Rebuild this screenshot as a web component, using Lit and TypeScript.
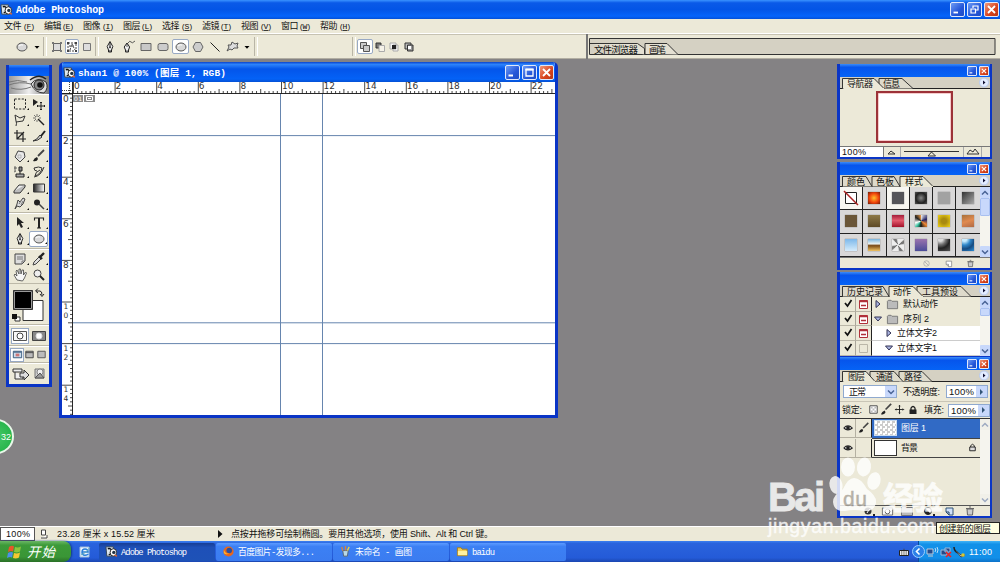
import { LitElement, html, svg, css } from 'lit';
import { customElement, property } from 'lit/decorators.js';
import { styleMap } from 'lit/directives/style-map.js';

// one line of text squeezed to a fixed width, the way the bitmap fonts sit
const label = (text: string, width: number, size = 9, cls = "") => html`
  <svg class="label ${cls}" width=${width} height=${size + 3}>
    <text y=${size} font-size=${size} textLength=${width}>${text}</text>
  </svg>`;

const icons: Record<string, any> = {
  ellipse: svg`<ellipse rx="5" ry="4" fill="#d8d8d8" stroke="#555"/><path d="M-3 -1q2-2 4-1" stroke="#fff"/>`,
  arrow: svg`<path d="M-2.5 -1h5l-2.5 2.8z" fill="#000"/>`,
  shape: svg`<path d="M-3.5 -3.5h7v7h-7z" fill="#ddd" stroke="#666"/><path d="M-5-5h2v2h-2zM3-5h2v2h-2zM-5 3h2v2h-2zM3 3h2v2h-2z" fill="#777"/>`,
  paths: svg`<path d="M-4-4h8v8h-8zM-2 3l2-6l3 6M-3-1h6" stroke="#444" stroke-dasharray="2 1"/><path d="M-5-5h2v2h-2zM3-5h2v2h-2zM-5 3h2v2h-2zM3 3h2v2h-2z" fill="#444"/>`,
  pixels: svg`<path d="M-3.5-3.5h7v7h-7z" fill="#ddd" stroke="#777"/>`,
  pen: svg`<path d="M-1.5 5v-2l-1.3-3.5L0-5.5l2.8 5L1.5 3v2z" fill="#eee" stroke="#222"/><path d="M0-5v5M-2 4h4" stroke="#222"/><circle r=".9" cy=".3" fill="#222"/>`,
  freepen: svg`<path d="M-3.5 5v-2l-1.3-3L-2-4l2.6 4L-.5 3v2z" fill="#eee" stroke="#222"/><path d="M-2-4v4M-4 4h4M-1-4q2-3 3-1t4-1" stroke="#333" stroke-width=".8"/>`,
  rect: svg`<path d="M-5-3.5h10v7h-10z" fill="#c8c8c8" stroke="#666"/>`,
  rrect: svg`<rect x="-5" y="-3.5" width="10" height="7" rx="2" fill="#ccc" stroke="#666"/>`,
  poly: svg`<path d="M-5 0l2.5-4.5h5L5 0L2.5 4.5h-5z" fill="#ccc" stroke="#666"/>`,
  line: svg`<path d="M-4.5-4.5l9 9" stroke="#222"/>`,
  blob: svg`<path d="M-6 4l2-4l-1-2l3 0l1-3l3 2l3-1l-1 3l1 2l-4 0l-2 2l-2-1z" fill="#ddd" stroke="#555"/>`,
  add: svg`<path d="M-4.5-4.5h6v6h-6z" fill="#ccc" stroke="#555"/><path d="M-1.5-1.5h6v6h-6z" fill="#ccc" stroke="#555"/>`,
  sub: svg`<path d="M-4-4h5v5h-5z" fill="#777" stroke="#333"/><path d="M-1-1.5h5.5v6h-5.5z" fill="#f5f2e8" stroke="#aaa"/>`,
  inter: svg`<path d="M-4-4h6v6h-6zM-1-2h5v6h-5z" fill="#f4f4f4" stroke="#aaa"/><path d="M-2-2h4v4h-4z" fill="#222"/>`,
  excl: svg`<path d="M-4-4h6v6h-6z" fill="#bbb" stroke="#333"/><path d="M-1.5-2h5.5v6h-5.5z" fill="#999" stroke="#333"/><path d="M-1-1h3v3h-3z" fill="#fff"/>`,
  marquee: svg`<path d="M-5.5-5h11v10h-11z" stroke="#222" stroke-dasharray="2.2 1.4"/>`,
  move: svg`<path d="M-6-5v7l5-4z" fill="#222"/><path d="M2-2v8M-2 2h8M1-1l1-1l1 1M1 5l1 1l1-1M-1 1l-1 1l1 1M5 1l1 1l-1 1" stroke="#222"/>`,
  lasso: svg`<path d="M-4 6q1-3 0-5l-1-6l5 3l5-2l-2 5l-7 1" stroke="#333"/>`,
  wand: svg`<path d="M-1-1l6 6" stroke="#222" stroke-width="1.4"/><path d="M-2-6v3M-2 0v2M-6-2h3M0-2h2M-5-5l2 2M1-5l-2 2M-5 1l2-2" stroke="#444" stroke-width=".7"/>`,
  crop: svg`<path d="M-3-6v9h9M-6-3h9v9M-3 3l7-7" stroke="#222" stroke-width="1.2"/>`,
  slice: svg`<path d="M-6 5q4-1 7-6l2 2q-4 4-9 4z" fill="#ccc" stroke="#333"/><path d="M2 0l4-5" stroke="#222" stroke-width="2"/>`,
  heal: svg`<path d="M-5 1l3-6l6 1l1 5l-5 5z" fill="#e8e8e8" stroke="#444"/><path d="M-2-1h3v3h-3z" stroke="#999" stroke-width=".6"/>`,
  brush: svg`<path d="M-6 5q1-3 4-4l1 2q-1 3-5 2z" fill="#222"/><path d="M-1 0l6-6" stroke="#444" stroke-width="1.8"/>`,
  stamp: svg`<path d="M-4 2h8v3h-8z" fill="#aaa" stroke="#222"/><path d="M0 2v-3M-1-5h3v4h-3z" fill="#888" stroke="#222"/><path d="M-6-4h3M-5-6v5M-6 0l2-1" stroke="#444" stroke-width=".8"/>`,
  history: svg`<path d="M-5-4q5-2 8 0q-1 6-7 8q0-4 5-6M-5-4q0 3 3 3M-5 5q7-1 10-10" stroke="#333"/>`,
  eraser: svg`<path d="M-6 3l5-6h6l-5 6z" fill="#eee" stroke="#333"/><path d="M-6 3v2h6l5-6v-2" fill="#bbb" stroke="#333"/>`,
  gradient: svg`<path d="M-5.5-4h11v8h-11z" fill="url(#fade)" stroke="#333"/>`,
  smudge: svg`<path d="M-5 5l2-5l1-4l2 2l3-4l2 1l-2 5l-3 3l-3-1z" fill="#ddd" stroke="#444"/><path d="M-1 0l2-3M1 1l2-4" stroke="#777"/>`,
  burn: svg`<circle cx="-2" cy="-1.5" r="3" fill="#222"/><path d="M0 0l5 5" stroke="#444" stroke-width="1.5"/>`,
  select: svg`<path d="M-3-6v9l2-2l2 4l2-1l-2-4h3z" fill="#222"/>`,
  type: svg`<path d="M-4.5-2.5v-2.500h9v2.500M-2 5h4" stroke="#222" stroke-width="1.1"/><path d="M0-5v10" stroke="#222" stroke-width="2"/>`,
  note: svg`<path d="M-5-5h10v7l-3 3h-7z" fill="#ddd" stroke="#444"/><path d="M-3-2h6M-3 0h6M2 5v-3h3" stroke="#777"/>`,
  dropper: svg`<path d="M-6 6l1-3l5-5l2 2l-5 5z" fill="#ddd" stroke="#444"/><path d="M0-3l3 3M1-2l4-4" stroke="#222" stroke-width="2.4"/>`,
  hand: svg`<path d="M-3 5l-3-5l1-1l2 2l-1-5l1-1l2 4v-5h1.5l.5 5l1-4h1.5v5l2-3l1 1l-2 5l-2 3z" fill="#f6f6f6" stroke="#444" stroke-width=".8"/>`,
  zoom: svg`<circle cx="-1.5" cy="-1.5" r="3.5" fill="#eee" stroke="#444"/><path d="M1 1l4 4" stroke="#222" stroke-width="2"/>`,
  mask: svg`<path d="M-6.5-4.5h13v9h-13z" fill="#f8f8f8" stroke="#555"/><circle r="3" fill="#fff" stroke="#444"/>`,
  maskOn: svg`<path d="M-6.5-4.5h13v9h-13z" fill="#888" stroke="#444"/><circle r="3" fill="#fff" stroke="#ddd"/>`,
  screen1: svg`<path d="M-4.5-3.5h9v7h-9z" fill="#cde" stroke="#357"/><path d="M-4-2.5h8" stroke="#357"/><path d="M-2-1h4v3h-4z" fill="#c77"/>`,
  screen2: svg`<path d="M-4-3.5h8v7h-8z" fill="#bbb" stroke="#444"/><path d="M-4-2h8" stroke="#444"/>`,
  screen3: svg`<path d="M-4-3.5h8v7h-8z" fill="#bbb" stroke="#555"/>`,
  jump: svg`<path d="M-7-5h9v3M-7-5v3h9M-5-2v7h8v-2" fill="#eee" stroke="#333"/><path d="M0-1h4v-3l5 5l-5 5v-3h-4z" fill="#ddd" stroke="#333"/>`,
  ready: svg`<path d="M-4-5h9v9h-9z" fill="#ccc" stroke="#777"/><circle cx="1" cy="-2" r="3" fill="#eee" stroke="#888"/><path d="M-4 4l5-5l4 5z" fill="#999" stroke="#555"/>`,
  eye: svg`<path d="M-5 0q5-5 10 0q-5 4.5-10 0" fill="#fff" stroke="#222" stroke-width="1.2"/><circle r="2.2" fill="#222"/>`,
  lock: svg`<path d="M-3.5-.5h7v4.5h-7z" fill="#222"/><path d="M-2 0v-2q2-3 4 0v2" stroke="#222" stroke-width="1.3"/>`,
  lockThin: svg`<path d="M-3-.5h6v4h-6z" fill="#ddd" stroke="#222"/><path d="M-2-.5v-1.5q2-3 4 0v1.5" stroke="#222"/>`,
  checker: svg`<path d="M-4-4h8v8h-8z" fill="#fff" stroke="#444"/><path d="M-3-3h2v2h-2zM1-3h2v2h-2zM-1-1h2v2h-2zM-3 1h2v2h-2zM1 1h2v2h-2z" fill="#bbb"/>`,
  cross: svg`<path d="M0-4.5v9M-4.5 0h9M-1-3.5l1-1l1 1M-1 3.5l1 1l1-1M-3.5-1l-1 1l1 1M3.5-1l1 1l-1 1" stroke="#222"/>`,
  folder: svg`<path d="M-5.5-3.5l1-1h3l1 1h6v8h-11z" fill="#bbb" stroke="#777"/>`,
  none: svg`<circle r="3.5" stroke="#aaa"/><path d="M-2.5-2.5l5 5" stroke="#aaa"/>`,
  page: svg`<path d="M-3-3h7v7h-4l-3-3z" fill="#fff" stroke="#888"/><path d="M-3 1h3v3" stroke="#888"/>`,
  pageBlue: svg`<path d="M-3-3h7v7h-4l-3-3z" fill="#cfe0fa" stroke="#357"/><path d="M-3 1h3v3" stroke="#246"/>`,
  trash: svg`<path d="M-3-2h6l-.5 6h-5z" fill="#ccc" stroke="#666"/><path d="M-4-2.5h8M-1-4h2" stroke="#666"/>`,
  fx: svg`<circle r="3.5" fill="#333"/><path d="M-1 2q1-2 3-4" stroke="#fff"/><path d="M5 3h2v2h-2z" fill="#222"/>`,
  adjust: svg`<circle r="3.5" fill="#fff" stroke="#333"/><path d="M-2.5-2.5l5 5a3.5 3.5 0 0 1-5-5" fill="#222"/><path d="M5 3h2v2h-2z" fill="#222"/>`,
  ps: svg`<path d="M-6-5h8v10h-7z" fill="#dfe8ee" stroke="#345"/><path d="M-4-3q4-1 4 3t-3 3" stroke="#111" stroke-width="1.5"/><ellipse cx="2" cy="1" rx="3.5" ry="4" fill="#fff" stroke="#222"/><circle cx="2.5" cy="1" r="1.8" fill="#234"/><path d="M3 4l3 1" stroke="#d63" stroke-width="1.5"/>`,
  ie: svg`<path d="M-5-5h9v10h-9z" fill="#eef5ff" stroke="#9bd"/><path d="M-3 0h6q0-3-3-3t-3 3.2t3 3t3-1.5" stroke="#2a7fd8" stroke-width="1.5"/><path d="M-4 3q6-2 9-8" stroke="#6ab"/>`,
  firefox: svg`<circle r="5.5" fill="#e8661b"/><circle cx=".8" cy="-1" r="3" fill="#2b4f9e"/><path d="M-5-2q2 5 6 4q-3 2-6 0z" fill="#ffb52e"/>`,
  paint: svg`<path d="M-3-1h6l-1 6h-4z" fill="#b9d9e8" stroke="#567"/><path d="M-3-1l-1-4M0-1v-5" stroke="#d9843b" stroke-width="1.5"/><path d="M2-1l2-4" stroke="#e9d044" stroke-width="1.5"/>`,
  dir: svg`<path d="M-5.5-4h4l1 1.5h5.5v7h-10.5z" fill="#f4cf57" stroke="#a87d16"/><path d="M-5-.5h10v4.5h-10z" fill="#fff1a0"/>`,
  keyboard: svg`<path d="M-4.5-1.5h9v5h-9z" fill="#eee" stroke="#222"/><path d="M-3 0h6M-3 2h6M0-2v-2" stroke="#444" stroke-dasharray="1 .7"/>`,
  net: svg`<path d="M-5-3h6v5h-6z" fill="#264a8a" stroke="#bcd"/><path d="M-4 4h5" stroke="#ccc"/><path d="M3-4q1.5 2 0 4M5-5q2 3 0 6" stroke="#fff" stroke-width=".7"/>`,
  netOff: svg`<path d="M-1-4h5v4h-5zM-5-2h6v5h-6z" fill="#264a8a" stroke="#9bd"/><path d="M0 0l5 5M5 0l-5 5" stroke="#e22" stroke-width="1.6"/>`,
  device: svg`<path d="M-6-5q0 4 4 6" stroke="#222" stroke-width="1.5"/><path d="M-4-1l5 4l4 0l-4 2z" fill="#eee" stroke="#444"/><circle cx="3" cy="3" r="1.8" fill="#d7c832"/>`,
  doc: svg`<path d="M-2.5-4h4v5h-4zM-3 4h6v-3" fill="#fff" stroke="#444"/>`,
};

const icon = (name: string, size = 14) => html`
  <svg class="icon" width=${size} height=${size} viewBox="-7 -7 14 14" fill="none">${icons[name]}</svg>`;

const shared = css`
  * { box-sizing: border-box; }
  svg { display: block; flex: none; overflow: visible; }
  .label text { font-family: "Liberation Sans", "Noto Sans CJK SC", sans-serif; fill: #111; }
  .label.mono text { font-family: "Liberation Mono", "Noto Sans CJK SC", monospace; }
  .label.white text { fill: #fff; }
  .label.bold text { font-weight: bold; }
  .btn {
    width: 15px; height: 15px; border: 1px solid #dfe8fb; border-radius: 2px; flex: none;
    background: linear-gradient(135deg, #6d9bf5, #2456d8 60%, #1f4cc4);
  }
  .btn.close { background: linear-gradient(135deg, #f0997b, #d8431d 60%, #b93614); }
  .btn svg { width: 100%; height: 100%; }
`;

const winButton = (kind: string) => html`
  <div class="btn ${kind}">
    <svg viewBox="0 0 13 13" fill="none" stroke="#fff" stroke-width="1.8">
      ${kind === "close" ? svg`<path d="M3 3l7 7M10 3l-7 7"/>`
        : kind === "max" ? svg`<path d="M3 3.5h7v6.5h-7z" stroke-width="1.3"/><path d="M2.5 3.5h8"/>`
        : kind === "restore" ? svg`<path d="M5 5v-2h5v4h-2M3 6h4.5v4h-4.5z" stroke-width="1.2"/>`
        : svg`<path d="M2.5 9.5h4.5"/>`}
    </svg>
  </div>`;

interface Tab {
  text: string;
  left: number;
  right: number;
  slant: number;
  at: number;
  width: number;
  active?: boolean;
}

@customElement('ps-palette')
export class PaletteComponent extends LitElement {
  @property({ attribute: false })
  tabs: Tab[] = [];

  static styles = [shared, css`
    :host {
      display: flex; flex-direction: column; box-sizing: border-box; overflow: hidden;
      border: 3px solid #0a35c6; border-top: 0; border-right-width: 2px; border-bottom-width: 2px; background: #ece9d8;
    }
    .bar {
      display: flex; justify-content: flex-end; align-items: center; gap: 2px; flex: none;
      height: 13px; padding-right: 1px; background: linear-gradient(#3b8cf8, #0655ec 25%, #0563f6);
    }
    .bar .btn { width: 10px; height: 10px; border-radius: 1px; }
    .strip { height: 12px; flex: none; background: #d5d1c3; }
    .strip text { font-family: "Noto Sans CJK SC", sans-serif; font-size: 9px; fill: #111; }
    .body { flex: 1; min-height: 0; display: flex; flex-direction: column; }
  `];

  renderTab(t: Tab) {
    return svg`
      <path d="M${t.left} 11.5V1.5H${t.right}L${t.right + t.slant} 11.5"
        fill=${t.active ? "#ece9d8" : "#dedacb"} stroke="#222" stroke-width=".9"/>
      <text x=${t.at} y="10" textLength=${t.width}>${t.text}</text>`;
  }

  render() {
    const tabs = [...this.tabs].reverse().sort((a, b) => Number(!!a.active) - Number(!!b.active));
    const active = this.tabs.find((t) => t.active);
    return html`
      <div class="bar">${winButton("min")}${winButton("close")}</div>
      <svg class="strip" width="150" height="12">
        <path d="M0 11.5H150" stroke="#222"/>
        ${tabs.map((t) => this.renderTab(t))}
        ${active ? svg`<path d="M${active.left + 1} 11.5H${active.right + active.slant}" stroke="#ece9d8" stroke-width="1.2"/>` : ""}
        <circle cx="144" cy="5.5" r="4.5" fill="#e3ecff" stroke="#b7c9ee"/>
        <path d="M143 3.5v4l2.5-2z" fill="#113"/>
      </svg>
      <div class="body"><slot></slot></div>
    `;
  }
}

const tools = [
  ["marquee", "move", "lasso", "wand", "crop", "slice"],
  ["heal", "brush", "stamp", "history", "eraser", "gradient", "smudge", "burn"],
  ["select", "type", "pen", "ellipse"],
  ["note", "dropper", "hand", "zoom"],
];
const plain = ["move", "wand", "crop", "hand", "zoom"];

const menus: [string, string][] = [
  ["文件", "F"], ["编辑", "E"], ["图像", "I"], ["图层", "L"], ["选择", "S"],
  ["滤镜", "T"], ["视图", "V"], ["窗口", "W"], ["帮助", "H"],
];

// icon name and the width of its slot
const options: [string, number][] = [
  ["ellipse", 20], ["arrow", 9], ["|", 8], ["shape", 16], ["paths on", 14], ["pixels", 15], ["|", 6],
  ["pen", 19], ["freepen", 19], ["rect", 15], ["rrect", 19], ["ellipse on", 17], ["poly", 17],
  ["line", 18], ["blob", 18], ["arrow", 10], ["|", 7], ["", 92], ["|", 6],
  ["add on", 16], ["sub", 13], ["inter", 15], ["excl", 15], ["", 170],
];

const swatches = [
  "none",
  "radial-gradient(#ffc02c, #f0440c 55%, #6c1c08)",
  "#55555a",
  "radial-gradient(#888, #222 60%, #555)",
  "#a2a2a2",
  "linear-gradient(135deg, #333, #aaa)",
  "#6a5638",
  "linear-gradient(#8d7948, #5e4a26)",
  "linear-gradient(#a31d3b, #e35a6d 45%, #a3122a)",
  "conic-gradient(#eee, #226 20%, #e83 35%, #111 50%, #3b9 60%, #fff 70%, #222 85%, #e94)",
  "radial-gradient(#a88a10 30%, #f2d415)",
  "linear-gradient(160deg, #a7713a, #e08a50 50%, #b06a45)",
  "linear-gradient(#7db8ea, #d6ecfb)",
  "linear-gradient(#79b4dd, #e9f1f1 40%, #7a4a15 55%, #f0c464)",
  "repeating-conic-gradient(#eee 0 12%, #777 15% 20%, #fff 25%)",
  "linear-gradient(#9a73ae, #4a4c98)",
  "radial-gradient(circle at 20% 0, #ddd 15%, #777 35%, #222 60%, #555)",
  "radial-gradient(circle at 20% 0, #c8ecff 15%, #2f86c8 40%, #164a80 65%, #2c92dc)",
];

const actions = [
  { text: "默认动作", width: 35, depth: 0, open: false, red: true },
  { text: "序列 2", width: 26, depth: 0, open: true, red: true },
  { text: "立体文字2", width: 40, depth: 1, open: false, red: true },
  { text: "立体文字1", width: 40, depth: 1, open: true, red: false },
];

const tasks: [string, string, number, boolean][] = [
  ["ps", "Adobe Photoshop", 66, true],
  ["firefox", "百度图片-发现多...", 77, false],
  ["paint", "未命名 - 画图", 57, false],
  ["dir", "baidu", 23, false],
];

// pixels per centimetre on the rulers
const UNIT = 20.8;

@customElement('app-root')
export class AppRoot extends LitElement {
  static styles = [shared, css`
    :host {
      display: flex; flex-direction: column; position: relative; width: 1000px; height: 562px;
      overflow: hidden; background: #848284; font-family: "Liberation Sans", "Noto Sans CJK SC", sans-serif;
    }
    .row { display: flex; align-items: center; }
    .title {
      height: 19px; flex: none; padding: 0 1px 0 0; gap: 2px;
      background: linear-gradient(#3a93ff, #0a5ae8 15%, #0355e6 50%, #0564fb 85%, #0350d8);
    }
    .title .label { margin: 0 auto 0 1px; }
    .menu { height: 15px; flex: none; padding-left: 4px; background: #ece9d8; border-bottom: 1px solid #fff; }
    .item { display: flex; width: 39.55px; }
    .options { height: 25px; flex: none; padding-left: 12px; background: #ece9d8; border-top: 1px solid #c6c2b2; border-bottom: 1px solid #b2aea2; }
    .slot { display: flex; align-items: center; justify-content: center; height: 15px; flex: none; }
    .slot.on { background: #fff; border: 1px solid #98a9c4; border-radius: 2px; }
    .slot.sep::after { content: ""; width: 2px; height: 19px; border-left: 1px solid #b9b5a6; border-right: 1px solid #fff; }
    .well { width: 409px; height: 25px; border-left: 2px solid #777; padding: 4px 0 0 1px; }
    .well text { font-size: 9.5px; font-family: "Noto Sans CJK SC", sans-serif; fill: #111; }
    .desk { flex: 1; position: relative; }
    .status { height: 15px; flex: none; background: #ece9d8; border-top: 1px solid #fff; }
    .zoomBox { display: flex; align-items: center; width: 35px; height: 14px; padding-left: 5px; background: #fff; border: 1px solid #555; }
    .status .icon { margin: 0 6px 0 2px; }
    .play { margin: 0 8px 0 63px; }

    .toolbox { position: absolute; left: 6px; top: 6px; width: 46px; height: 322px; border: 3px solid #0a35c6; border-top: 0; background: #ece9d8; }
    .toolbox .cap { height: 11px; background: linear-gradient(#3b8cf8, #0655ec 30%, #0563f6); }
    .group { display: grid; grid-template-columns: 19px 19px; justify-content: center; padding: 1px 0 .5px; border-top: 1px solid #fff; border-bottom: 1px solid #bdb9a9; }
    .tool { display: flex; align-items: center; justify-content: center; height: 16px; position: relative; }
    .tool.on { background: #fff; border: 1px solid #98a9c4; border-radius: 2px; }
    .tool.more::after { content: ""; position: absolute; right: 0; bottom: 2px; border: 1.5px solid #111; border-top-color: transparent; border-left-color: transparent; }
    .colors { padding: 3px 0 2px 2px; border-bottom: 1px solid #bdb9a9; }
    .modes { display: flex; justify-content: center; align-items: center; gap: 3px; height: 21px; border-top: 1px solid #fff; border-bottom: 1px solid #bdb9a9; }
    .modes.three { height: 17px; gap: 0; }
    .modes.last { border-bottom: 0; }
    .modes > div { display: flex; align-items: center; justify-content: center; width: 16px; height: 14px; }
    .modes.three > div { width: 12px; height: 12px; }
    .modes .on { background: #fff; outline: 1px solid #98a9c4; }

    .document { position: absolute; left: 59px; top: 3px; width: 499px; height: 356px; border: 3px solid #0a35c6; border-top: 0; border-radius: 5px 5px 0 0; overflow: hidden; background: #fff; }
    .document .bar { height: 20px; padding-right: 1px; gap: 2px; background: linear-gradient(#0a43cc, #2d83fb 12%, #0455ea 35%, #0462f7 85%, #0450d4); }
    .document .bar .label { margin: 0 auto 0 0; }
    .document .bar .icon { margin-left: 1px; }
    .canvas text { font-family: "DejaVu Sans", sans-serif; font-size: 9px; fill: #333; }
    .canvas .down { font-size: 7.5px; }
    .canvas .tag { font-size: 6px; fill: #fff; }

    ps-palette { position: absolute; left: 837px; width: 155px; }
    .navigator { top: 5px; height: 95px; }
    .styles { top: 103px; height: 108px; }
    .actions { top: 213px; height: 86px; }
    .layers { top: 298px; height: 161px; }
    .preview { width: 77px; height: 52px; margin: 2px 0 3px 36px; flex: none; background: #fff; border: 2px solid #9c3238; box-shadow: inset 0 0 0 .5px #e99; }
    .navfoot { height: 11px; flex: none; border-top: 1px solid #777; }
    .navfoot .pct { display: flex; align-items: center; width: 44px; height: 11px; padding-left: 2px; background: #fff; border-right: 1px solid #777; }
    .tiles { display: grid; grid-template-columns: repeat(6, 23.3px); grid-template-rows: repeat(3, 23.3px); }
    .tile { display: flex; align-items: center; justify-content: center; background: #d9d8d8; border-right: 1px solid #222; border-bottom: 1px solid #222; }
    .tile:nth-child(6n) { border-right: 0; }
    .tile.picked { background: #f7f6f1; }
    .tile > div { width: 12px; height: 12px; box-shadow: 0 0 1px #666; }
    .scroll { display: flex; flex-direction: column; justify-content: space-between; flex: 1; background: #f5f4ee; }
    .scroll.tall { height: 70px; }
    .scroll i { display: flex; justify-content: center; align-items: center; height: 11px; background: #c8d8fb; border-radius: 1px; }
    .scroll.off i { background: #eeede5; opacity: .5; }
    .scroll .thumb { flex: none; height: 18px; margin-bottom: auto; border: 1px solid #a9c0f0; }
    .scroll .thumb.short { height: 8px; }
    .foot { flex: 1; justify-content: flex-end; gap: 11px; padding-right: 14px; border-top: 1px solid #777; }
    .fill { display: flex; flex: 1; min-height: 0; }
    .list { width: 140px; }
    .action { height: 14.7px; display: flex; align-items: center; background: #ece9d8; }
    .action .check { width: 16px; height: 14.7px; padding: 2px 3px; border-right: 1px solid #aaa69a; border-bottom: 1px solid #bbb7a8; }
    .action .dialog { width: 16px; height: 14.7px; padding: 2px; border-right: 1.5px solid #222; border-bottom: 1px solid #bbb7a8; }
    .action .name { display: flex; align-items: center; gap: 4px; flex: 1; height: 14.7px; padding-left: 2px; }
    .action.deep .name { background: #fff; padding-left: 13px; border-bottom: 1px solid #ccc; }
    .blend { height: 19px; flex: none; padding: 0 2px 0 3px; gap: 6px; }
    .locks { height: 17px; flex: none; padding: 0 2px 0 2px; border-top: 1px solid #c9c5b6; }
    .locks .marks { display: flex; margin: 0 4px 0 5px; }
    .combo { display: flex; align-items: center; justify-content: space-between; width: 58px; height: 13px; padding-left: 5px; background: #fff; border: 1px solid #8fa9cf; }
    .combo.pct { width: 42px; padding-left: 2px; flex: none; }
    .locks .combo { margin-left: 4px; }
    .combo i { display: flex; align-items: center; width: 11px; height: 11px; justify-content: center; background: #c8d8fb; }
    .layer { display: flex; align-items: center; height: 19.5px; flex: none; }
    .layer .cell { display: flex; align-items: center; justify-content: center; width: 16px; height: 19px; border-right: 1px solid #b5b1a2; border-bottom: 1px solid #b5b1a2; }
    .layer .cell + .cell { border-right: 1.5px solid #222; }
    .layer .name { display: flex; align-items: center; gap: 4px; flex: 1; height: 19.5px; padding: 0 1px 0 2px; border-bottom: 1px solid #444; }
    .layer .name .icon { margin-left: auto; }
    .layer.on .name { background: #316ac5; }
    .layer .thumb { width: 23px; height: 16px; border: 1px solid #333; background: #fff; }
    .layer.on .thumb { background: repeating-conic-gradient(#ccc 0 25%, #fff 0 50%) 0 0 / 5px 5px; border-color: #cde; }
    .laybox { border-top: 1.5px solid #333; }
    .layfoot { height: 11px; flex: none; justify-content: flex-end; gap: 7px; padding-right: 13px; border-top: 1px solid #555; }

    .bubble { position: absolute; left: -21px; top: 419px; width: 35px; height: 35px; padding: 10px 0 0 20px; border-radius: 50%; border: 2px solid #e8f7e8; background: radial-gradient(#45c866, #1cae42); }
    .hint { position: absolute; right: 0; top: 522px; display: flex; width: 64px; height: 12px; padding-left: 2px; background: #ffffe1; border: 1px solid #222; }
    .watermark { position: absolute; left: 760px; top: 450px; opacity: .82; pointer-events: none; }
    .watermark text { font-family: "Liberation Sans", "Noto Sans CJK SC", sans-serif; fill: #fff; stroke: #fff; stroke-width: .8; }
    .watermark .url { stroke-width: .4; }
    .watermark .du { fill: #a9a59c; stroke: #a9a59c; stroke-width: .4; }

    .taskbar { height: 21px; flex: none; background: linear-gradient(#3b80f0, #2a63dd 12%, #245bd8 80%, #1b46b0); }
    .start { display: flex; align-items: center; gap: 4px; width: 71px; height: 21px; padding-left: 7px; border-radius: 0 8px 8px 0; background: linear-gradient(#6bb765, #3c9a38 20%, #3a9636 75%, #2a7027); box-shadow: 1px 0 2px #143a8a; font-style: italic; }
    .taskbar > .icon { margin: 0 7px; }
    .task { display: flex; align-items: center; gap: 3px; width: 116px; height: 18px; margin-right: 1px; padding-left: 6px; border-radius: 2px; background: linear-gradient(#5c9bff, #3c80f4 20%, #3b7cf0); }
    .task.on { background: linear-gradient(#173d94, #1e50b8 25%, #1e52b7); }
    .right { display: flex; align-items: center; margin-left: auto; }
    .tray { display: flex; align-items: center; width: 82px; height: 21px; margin-left: 7px; background: linear-gradient(#42b4f8, #1291e8 15%, #128fe9 80%, #0d72c8); border-left: 1px solid #0a4a9a; }
    .tray .label { margin-left: 2px; }
    .chev { width: 13px; height: 13px; margin-left: -7px; border-radius: 50%; background: #2a80e8; border: 1px solid #9cd0ff; }
  `];

  renderToolOptions() {
    return html`
      <div class="row options">
        ${options.map(([name, width]) => {
          const [id, on] = name.split(" ");
          return html`<div class="slot ${on ?? ""} ${id === "|" ? "sep" : ""}" style=${styleMap({ width: `${width}px` })}>
            ${icons[id] ? icon(id) : ""}
          </div>`;
        })}
        <div class="well">
          <svg width="406" height="17">
            <path d="M.5.5h405.5v16h-405.5z" fill="#d5d1c3" stroke="#333"/>
            <path d="M56 16V5.5h22l11 11M.5 5.5h48l7 5v6" fill="#e4e0d2" stroke="#333"/>
            <text x="5" y="15" textLength="44">文件浏览器</text>
            <text x="60" y="15" textLength="17">画笔</text>
          </svg>
        </div>
      </div>`;
  }

  renderToolbox() {
    return html`
      <div class="toolbox">
        <div class="cap"></div>
        <svg width="40" height="18">
          <defs>
            <linearGradient id="fade"><stop stop-color="#222"/><stop offset="1" stop-color="#fff"/></linearGradient>
            <linearGradient id="head"><stop stop-color="#999"/><stop offset=".5" stop-color="#eee"/><stop offset="1" stop-color="#777"/></linearGradient>
          </defs>
          <path d="M0 0h40v18h-40z" fill="url(#head)"/>
          <path d="M0 9q10-4 22-1M2 12q10 3 20-1M0 6q8-3 18 0" fill="none" stroke="#777"/>
          <path d="M22 8q6-8 15-2q3 6-2 11q-9 0-13-9" fill="#ddd" stroke="#333"/>
          <circle cx="30" cy="9" r="5" fill="#888" stroke="#222"/><circle cx="31" cy="9" r="2.8" fill="#111"/>
          <path d="M21 4q9-7 16-1" fill="none" stroke="#222" stroke-width="1.5"/>
        </svg>
        ${tools.map((group) => html`<div class="group">
          ${group.map((t) => html`<div class="tool ${t === "ellipse" ? "on" : ""} ${plain.includes(t) ? "" : "more"}">${icon(t)}</div>`)}
        </div>`)}
        <div class="colors">
          <svg width="36" height="35">
            <path d="M12 13.5h20v20h-20z" fill="#fff" stroke="#333"/>
            <path d="M2.5 3.5h19v19h-19z" fill="#000" stroke="#333"/><path d="M3.5 4.5h17v17h-17z" stroke="#999" fill="none"/>
            <path d="M4 30h5v4h-5z" fill="#fff" stroke="#333"/><path d="M1 27h5v5h-5z" fill="#111"/>
            <path d="M25 4h4q2 0 2 4M27 1.5l-2.5 2.5l2.5 2M29 7l2 2.5l2-2.5" fill="none" stroke="#222"/>
          </svg>
        </div>
        <div class="modes"><div class="on">${icon("mask")}</div><div>${icon("maskOn")}</div></div>
        <div class="modes three"><div class="on">${icon("screen1", 13)}</div><div>${icon("screen2", 13)}</div><div>${icon("screen3", 13)}</div></div>
        <div class="modes last"><div>${icon("jump")}</div><div>${icon("ready")}</div></div>
      </div>`;
  }

  renderRulers() {
    const across = Array.from({ length: 116 }, (_, i) => 11.5 + i * UNIT / 5);
    const down = Array.from({ length: 78 }, (_, i) => 12 + i * UNIT / 5);
    return html`
      <svg class="canvas" width="493" height="333">
        <g stroke="#333" stroke-width=".9">
          ${across.map((x, i) => svg`<path d="M${x} ${i % 10 === 0 ? 0 : i % 5 === 0 ? 7 : 9}V11.5"/>`)}
          ${down.map((y, i) => svg`<path d="M${i % 10 === 0 ? 0 : i % 5 === 0 ? 6 : 8} ${y}H10.5"/>`)}
          <path d="M0 11.5H493M10.5 0V333" stroke="#111"/>
          <path d="M0 8.5h12M7.5 0v12" stroke-dasharray="1 1"/>
        </g>
        ${[0, 2, 4, 6, 8, 10, 12, 14, 16, 18, 20, 22].map((n) => svg`<text x=${12 + n * UNIT} y="7">${n}</text>`)}
        ${[0, 2, 4, 6, 8].map((n) => svg`<text x="1" y=${20 + n * UNIT}>${n}</text>`)}
        ${[10, 12, 14].map((n) => String(n).split("").map((d, i) => svg`<text class="down" x="1.5" y=${19 + n * UNIT + i * 9}>${d}</text>`))}
        <path d="M11 ${12 + 2 * UNIT}H493M11 ${12 + 11 * UNIT}H493M11 ${12 + 12 * UNIT}H493M218.5 12V333M260.5 12V333" stroke="#6685ae" fill="none"/>
        <path d="M11 13h10v7h-10zM22 13h11v7h-11z" fill="#8a8a8a"/>
        <text x="12" y="19" class="tag" textLength="8">01</text>
        <path d="M24.5 14.5h6v4h-6zM26 16.5h3" stroke="#fff" fill="none"/>
      </svg>`;
  }

  scrollArrow(up: boolean) {
    return html`<i><svg width="8" height="6" fill="none" stroke="#4a6496" stroke-width="1.5">
      <path d=${up ? "M1 4.5l3-3l3 3" : "M1 1.5l3 3l3-3"}/></svg></i>`;
  }

  renderPercent() {
    return html`<div class="combo pct">${label("100%", 25, 9.5)}<i><svg width="5" height="6"><path d="M1 0v6l3-3z" fill="#357"/></svg></i></div>`;
  }

  renderPalettes() {
    return html`
      <ps-palette class="navigator" .tabs=${[
        { text: "导航器", left: 2.5, right: 34, slant: 10, at: 7, width: 26, active: true },
        { text: "信息", left: 39, right: 62, slant: 11, at: 43, width: 17 }]}>
        <div class="preview"></div>
        <div class="row navfoot">
          <div class="pct">${label("100%", 24, 9)}</div>
          <svg width="106" height="10" fill="none" stroke="#333">
            <path d="M4 7l3-3l4 3zM20 4.5h55M44 9l3.5-4l4 4zM83 7l3-4l3 2l2-3l4 5z"/><path d="M16.5 0v10M79.5 0v10M97.5 0v10" stroke="#aaa"/>
          </svg>
        </div>
      </ps-palette>
      <ps-palette class="styles" .tabs=${[
        { text: "颜色", left: 2.5, right: 26, slant: 6, at: 7, width: 18 },
        { text: "色板", left: 32, right: 54, slant: 6, at: 36, width: 18 },
        { text: "样式", left: 60, right: 83, slant: 10, at: 65, width: 18, active: true }]}>
        <div class="row">
          <div class="tiles">
            ${swatches.map((background, i) => html`<div class="tile ${i === 0 || i === 2 ? "picked" : ""}">
              ${i === 0
                ? html`<svg width="16" height="16"><path d="M2.5 2.5h11v11h-11z" fill="#fff" stroke="#222"/><path d="M1 1l14 14" stroke="#a22" stroke-width="1.5"/></svg>`
                : html`<div style=${styleMap({ background })}></div>`}
            </div>`)}
          </div>
          <div class="scroll tall">${this.scrollArrow(true)}<i class="thumb"></i>${this.scrollArrow(false)}</div>
        </div>
        <div class="row foot">${icon("none", 11)}${icon("page", 11)}${icon("trash", 11)}</div>
      </ps-palette>
      <ps-palette class="actions" .tabs=${[
        { text: "历史记录", left: 2.5, right: 43, slant: 6, at: 7, width: 36 },
        { text: "动作", left: 49, right: 73, slant: 10, at: 53, width: 18, active: true },
        { text: "工具预设", left: 77, right: 121, slant: 10, at: 82, width: 36 }]}>
        <div class="fill">
          <div class="list">
            ${actions.map((a) => html`<div class="action ${a.depth ? "deep" : ""}">
              <div class="check"><svg width="10" height="9"><path d="M2 4l2.5 3l4-6" fill="none" stroke="#111" stroke-width="1.7"/></svg></div>
              <div class="dialog"><svg width="11" height="10">${a.red
                ? svg`<path d="M1.5 1.5h8v8h-8z" fill="#fff" stroke="#b0313a"/><path d="M1 2.5h9M3 6.5h5" stroke="#b0313a" stroke-width="1.5"/>`
                : svg`<path d="M1.5 1.5h8v8h-8z" fill="none" stroke="#bbb7a8"/>`}</svg></div>
              <div class="name">
                <svg width="8" height="8"><path d=${a.open ? "M.5 2h7l-3.5 4z" : "M2 .5v7l4-3.5z"} fill="#aab4e0" stroke="#335"/></svg>
                ${a.depth ? "" : icon("folder", 13)}
                ${label(a.text, a.width, 9)}
              </div>
            </div>`)}
          </div>
          <div class="scroll">${this.scrollArrow(true)}<i class="thumb short"></i>${this.scrollArrow(false)}</div>
        </div>
      </ps-palette>
      <ps-palette class="layers" .tabs=${[
        { text: "图层", left: 2.5, right: 26, slant: 9, at: 8, width: 17, active: true },
        { text: "通道", left: 30, right: 54, slant: 9, at: 36, width: 17 },
        { text: "路径", left: 59, right: 82, slant: 10, at: 64, width: 18 }]}>
        <div class="row blend">
          <div class="combo">${label("正常", 17, 9)}${this.scrollArrow(false)}</div>
          ${label("不透明度:", 37, 9)}
          ${this.renderPercent()}
        </div>
        <div class="row locks">
          ${label("锁定:", 20, 9)}
          <div class="marks">${icon("checker", 13)}${icon("brush", 13)}${icon("cross", 13)}${icon("lock", 14)}</div>
          ${label("填充:", 20, 9)}
          ${this.renderPercent()}
        </div>
        <div class="fill laybox">
          <div class="list">
            <div class="layer on">
              <div class="cell">${icon("eye", 12)}</div><div class="cell">${icon("brush", 12)}</div>
              <div class="name"><div class="thumb"></div>${label("图层 1", 25, 9, "white")}</div>
            </div>
            <div class="layer">
              <div class="cell">${icon("eye", 12)}</div><div class="cell"></div>
              <div class="name"><div class="thumb"></div>${label("背景", 17, 9)}${icon("lockThin", 13)}</div>
            </div>
          </div>
          <div class="scroll off">${this.scrollArrow(true)}${this.scrollArrow(false)}</div>
        </div>
        <div class="row layfoot">
          ${["fx", "mask", "folder", "adjust", "pageBlue", "trash"].map((n) => icon(n, n === "mask" ? 11 : 14))}
        </div>
      </ps-palette>`;
  }

  renderWatermark() {
    return html`
      <svg class="watermark" width="190" height="95">
        <text x="8" y="61" font-size="40" font-weight="bold" textLength="57">Bai</text>
        <g fill="#fff">
          <ellipse cx="76" cy="35" rx="6.5" ry="9" transform="rotate(-12 76 35)"/>
          <ellipse cx="88" cy="17" rx="7" ry="9.5"/>
          <ellipse cx="104" cy="17" rx="7" ry="9.5" transform="rotate(8 104 17)"/>
          <ellipse cx="114" cy="31" rx="6.5" ry="9" transform="rotate(15 114 31)"/>
          <path d="M94 28q7 0 13 11q10 7 9 14q-2 9-12 8q-10-2-19 0q-11 1-12-9q0-7 10-13q5-11 11-11z"/>
        </g>
        <text x="83" y="56" font-size="21" textLength="24" class="du">du</text>
        <text x="123" y="59" font-size="31" font-weight="bold" textLength="60">经验</text>
        <text x="8" y="83" font-size="19.5" textLength="167" class="url">jingyan.baidu.com</text>
      </svg>`;
  }

  render() {
    return html`
      <div class="row title">
        ${icon("ps", 13)}${label("Adobe Photoshop", 88, 10, "mono white bold")}
        ${winButton("min")}${winButton("restore")}${winButton("close")}
      </div>
      <div class="row menu">
        ${menus.map(([name, key]) => html`<div class="item">
          ${label(name, 17.5, 9)}
          <svg class="label mono" width="13" height="12"><text x="1" y="9" font-size="8" textLength="12">(<tspan text-decoration="underline">${key}</tspan>)</text></svg>
        </div>`)}
      </div>
      ${this.renderToolOptions()}
      <div class="desk">
        ${this.renderToolbox()}
        <div class="document">
          <div class="row bar">
            ${icon("ps", 13)}${label("shan1 @ 100% (图层 1, RGB)", 148, 9.5, "mono white bold")}
            ${winButton("min")}${winButton("max")}${winButton("close")}
          </div>
          ${this.renderRulers()}
        </div>
        ${this.renderPalettes()}
      </div>
      <div class="row status">
        <div class="zoomBox">${label("100%", 24, 9)}</div>
        ${icon("doc")}
        ${label("23.28 厘米 x 15.52 厘米", 98, 9)}
        <svg class="play" width="5" height="8"><path d="M0 0v8l4.5-4z" fill="#111"/></svg>
        ${label("点按并拖移可绘制椭圆。要用其他选项，使用 Shift、Alt 和 Ctrl 键。", 262, 9)}
      </div>
      <div class="row taskbar">
        <div class="start">
          <svg width="16" height="16">
            <path d="M2 3q3-2 5-.5l-1 5q-2-1-5 .5z" fill="#e8562a"/><path d="M8 3q3 1 6-.5l-1 5q-3 1.5-6 .5z" fill="#8cc63c"/>
            <path d="M1 9q3-1.5 5-.5l-1 5q-2-1-5 .5z" fill="#4d8fe8"/><path d="M7 9q3 1 6-.5l-1 5q-3 1.5-6 .5z" fill="#f6c832"/>
          </svg>
          ${label("开始", 28, 13.5, "white")}
        </div>
        ${icon("ie")}
        ${tasks.map(([id, name, width, on]) => html`<div class="task ${on ? "on" : ""}">${icon(id, 13)}${label(name, width, 8.8, "mono white")}</div>`)}
        <div class="right">
          ${icon("keyboard")}
          <div class="tray">
            <div class="chev"><svg width="11" height="11"><path d="M6.5 2.5l-3 3l3 3" fill="none" stroke="#fff" stroke-width="1.6"/></svg></div>
            ${icon("net")}${icon("netOff")}${icon("device")}
            ${label("11:00", 23, 9, "white")}
          </div>
        </div>
      </div>
      <div class="bubble">${label("32", 10, 9, "white")}</div>
      <div class="hint">${label("创建新的图层", 52, 9)}</div>
      ${this.renderWatermark()}
    `;
  }
}
